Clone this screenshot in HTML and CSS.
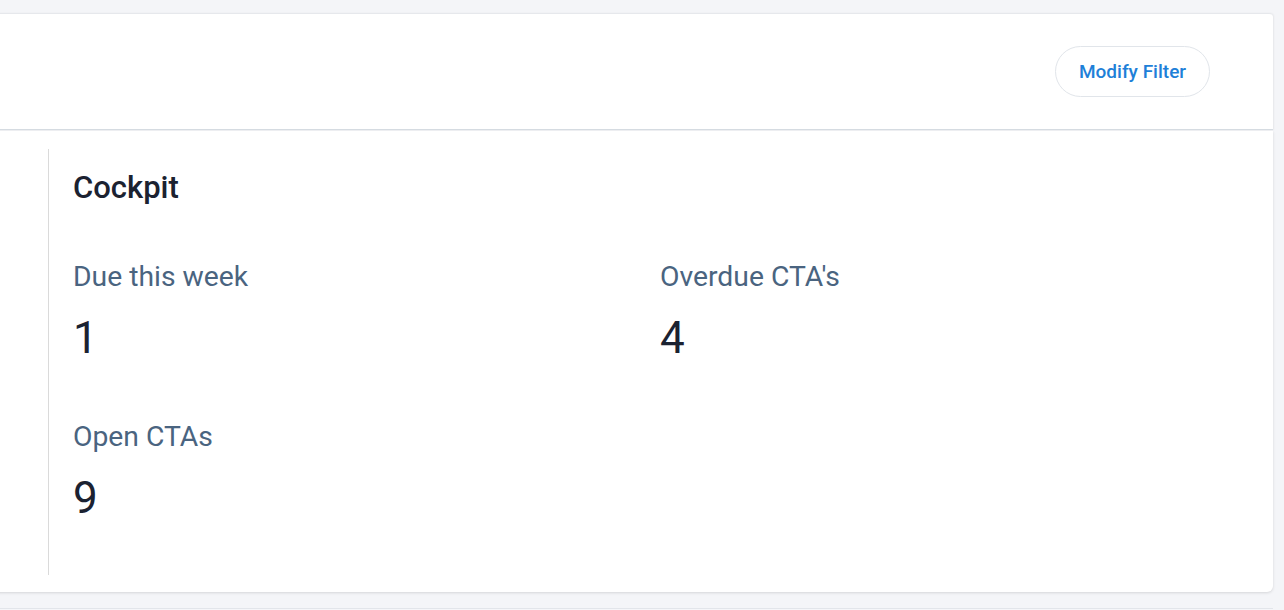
FILE: index.html
```html
<!DOCTYPE html>
<html lang="en">
<head>
<meta charset="utf-8">
<title>Cockpit</title>
<link rel="stylesheet" href="styles.css">
</head>
<body>
<div class="page">
  <header class="filter-bar">
    <button class="btn-outline" type="button">Modify Filter</button>
  </header>
  <section class="card">
    <div class="panel">
      <h2 class="panel-title">Cockpit</h2>
      <div class="stats">
        <div class="stat">
          <div class="stat-label">Due this week</div>
          <div class="stat-value">1</div>
        </div>
        <div class="stat">
          <div class="stat-label">Overdue CTA's</div>
          <div class="stat-value">4</div>
        </div>
        <div class="stat">
          <div class="stat-label">Open CTAs</div>
          <div class="stat-value">9</div>
        </div>
      </div>
    </div>
  </section>
  <div class="next-card"></div>
</div>
</body>
</html>
```

FILE: styles.css
```css
html, body {
  margin: 0;
  padding: 0;
  height: 100%;
  overflow: hidden;
}
body {
  background: #f4f5f8;
  font-family: Roboto, "Noto Sans", "Liberation Sans", sans-serif;
  color: #1b2231;
}
.page {
  padding: 13px 11px 0 0;
  margin-left: -8px;
}
.filter-bar {
  box-sizing: border-box;
  height: 117px;
  background: #ffffff;
  border-top: 1px solid #e6e8ec;
  border-bottom: 1px solid #d6dce2;
  border-radius: 4px 4px 0 0;
  box-shadow: 1px 0 2px rgba(0, 0, 0, 0.06);
  display: flex;
  align-items: center;
  justify-content: flex-end;
  padding-right: 63px;
}
.btn-outline {
  box-sizing: border-box;
  width: 155px;
  height: 51px;
  border: 1px solid #e1e5ea;
  border-radius: 26px;
  background: #ffffff;
  color: #1e80d8;
  font-family: Roboto, "Noto Sans", "Liberation Sans", sans-serif;
  font-weight: 500;
  font-size: 19px;
  padding: 0;
}
.card {
  box-sizing: border-box;
  height: 461px;
  margin-top: 1px;
  background: #ffffff;
  border-radius: 0 0 6px 6px;
  box-shadow: 0 1px 3px rgba(0, 0, 0, 0.13);
  padding: 18px 0 16px 56px;
}
.panel {
  box-sizing: border-box;
  height: 426px;
  border-left: 1px solid #dadada;
  padding: 22px 0 0 24px;
}
.panel-title {
  margin: 0;
  font-size: 31px;
  line-height: 34px;
  font-weight: 500;
  color: #1b2231;
}
.stats {
  margin-top: 56px;
  display: grid;
  grid-template-columns: 587px 587px;
  row-gap: 57px;
}
.stat-label {
  font-size: 28.3px;
  line-height: 32px;
  color: #4a6480;
}
.stat-value {
  margin-top: 19px;
  font-size: 44px;
  line-height: 52px;
  color: #1b2231;
}
.next-card {
  margin-top: 16px;
  height: 30px;
  border-top: 1px solid #e2e5ea;
  background: #f5f6f9;
}
```
